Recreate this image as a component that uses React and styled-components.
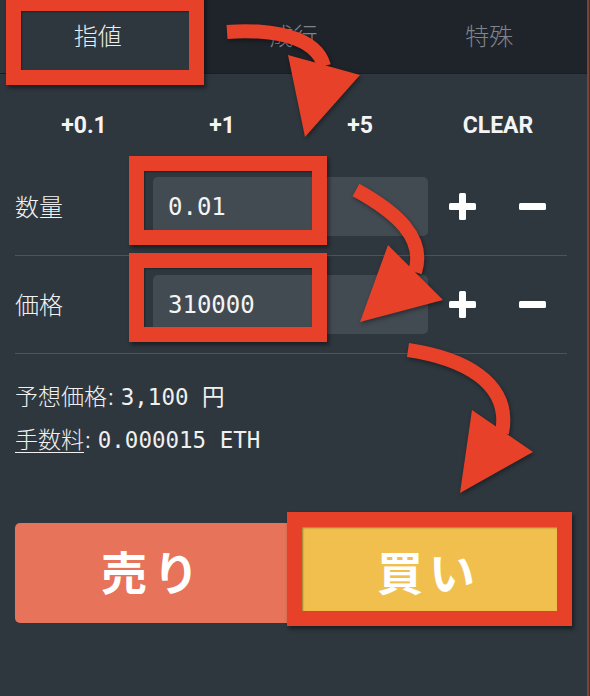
import React from "react";
import styled, { createGlobalStyle } from "styled-components";

const GlobalStyle = createGlobalStyle`
  html, body {
    margin: 0;
    padding: 0;
    background: #2e373e;
  }
  * { box-sizing: border-box; }
`;

const SANS = `"Noto Sans CJK JP", "Noto Sans", sans-serif`;
const MONO = `"DejaVu Sans Mono", "Noto Sans CJK JP", monospace`;

const Frame = styled.div`
  position: relative;
  width: 590px;
  height: 696px;
  overflow: hidden;
  background: #2e373e;
  font-family: ${SANS};
`;

const Panel = styled.div`
  width: 589px;
  height: 696px;
  background: #2e373e;
  border-right: 2px solid #7c4236;
`;

const Tabs = styled.div`
  display: grid;
  grid-template-columns: repeat(3, 1fr);
  height: 74px;
  background: #1f232a;
  border-bottom: 1px solid #1a1e23;
`;

const Tab = styled.div`
  display: flex;
  align-items: center;
  justify-content: center;
  padding-bottom: 4px;
  font-size: 24px;
  font-weight: 300;
  color: ${({ $active }) => ($active ? "#ececec" : "#7e848a")};
  background: ${({ $active }) => ($active ? "#2e373e" : "transparent")};
`;

const Body = styled.div`
  padding: 0 20px 0 15px;
`;

const QuickRow = styled.div`
  display: grid;
  grid-template-columns: repeat(4, 1fr);
  align-items: center;
  height: 84px;
  padding-top: 18px;
`;

const QuickBtn = styled.div`
  text-align: center;
  font-family: Roboto, "Liberation Sans", sans-serif;
  font-weight: 700;
  font-size: 23px;
  color: #f4f4f4;
`;

const FieldRow = styled.div`
  display: grid;
  grid-template-columns: 138px 275px 1fr 1fr;
  align-items: center;
  height: 98px;
  border-bottom: 1px solid #4b545b;
`;

const Label = styled.div`
  font-size: 24px;
  font-weight: 300;
  color: #f2f2f2;
  padding-bottom: 2px;
`;

const Input = styled.div`
  height: 59px;
  display: flex;
  align-items: center;
  padding-left: 15px;
  border-radius: 5px;
  background: #434b52;
  font-family: ${MONO};
  font-size: 24px;
  color: #f4f4f4;
`;

const IconCell = styled.div`
  display: flex;
  justify-content: center;
  align-items: center;
`;

const Info = styled.div`
  padding-top: 21px;
  font-size: 23px;
  line-height: 41px;
  color: #f0f0f0;
`;

const InfoLine = styled.div`
  display: flex;
  align-items: baseline;
  white-space: pre;
`;

const InfoKey = styled.span`
  font-family: ${SANS};
  font-weight: 300;
  text-decoration: ${({ $under }) => ($under ? "underline" : "none")};
  text-underline-offset: 4px;
  text-decoration-thickness: 1px;
`;

const Colon = styled.span`
  font-weight: 300;
  margin: 0 7px 0 1px;
`;

const InfoValue = styled.span`
  font-family: ${MONO};
  font-size: 22.5px;
`;

const Actions = styled.div`
  display: grid;
  grid-template-columns: 1fr 1fr;
  margin-top: 62px;
  height: 100px;
`;

const ActionBtn = styled.div`
  display: flex;
  align-items: center;
  justify-content: center;
  padding-bottom: 6px;
  font-size: 46px;
  font-weight: 700;
  letter-spacing: 6px;
  color: #ffffff;
  background: ${({ $kind }) => ($kind === "sell" ? "#e7735a" : "#f1bf4d")};
  border-radius: ${({ $kind }) => ($kind === "sell" ? "5px 0 0 5px" : "0 5px 5px 0")};
`;

/* annotation overlays */
const Mark = styled.div`
  position: absolute;
  border: 15px solid #e8412a;
  box-shadow: 2px 3px 4px rgba(0, 0, 0, 0.45), inset 1px 1px 2px rgba(0, 0, 0, 0.35);
  pointer-events: none;
`;

const Arrows = styled.svg`
  position: absolute;
  left: 0;
  top: 0;
  pointer-events: none;
  filter: drop-shadow(1px 2px 2px rgba(0, 0, 0, 0.4));
`;

const Plus = () => (
  <svg width="27" height="27" viewBox="0 0 27 27">
    <rect x="0" y="10" width="27" height="7" rx="1.5" fill="#fff" />
    <rect x="10" y="0" width="7" height="27" rx="1.5" fill="#fff" />
  </svg>
);

const Minus = () => (
  <svg width="27" height="27" viewBox="0 0 27 27">
    <rect x="0" y="10" width="27" height="7" rx="1.5" fill="#fff" />
  </svg>
);

const fields = [
  { label: "数量", value: "0.01" },
  { label: "価格", value: "310000" },
];

export default function App() {
  return (
    <>
      <GlobalStyle />
      <Frame>
        <Panel>
          <Tabs>
            <Tab $active>指値</Tab>
            <Tab>成行</Tab>
            <Tab>特殊</Tab>
          </Tabs>
          <Body>
            <QuickRow>
              <QuickBtn>+0.1</QuickBtn>
              <QuickBtn>+1</QuickBtn>
              <QuickBtn>+5</QuickBtn>
              <QuickBtn>CLEAR</QuickBtn>
            </QuickRow>
            {fields.map((f) => (
              <FieldRow key={f.label}>
                <Label>{f.label}</Label>
                <Input>{f.value}</Input>
                <IconCell><Plus /></IconCell>
                <IconCell><Minus /></IconCell>
              </FieldRow>
            ))}
            <Info>
              <InfoLine>
                <InfoKey>予想価格</InfoKey>
                <Colon>:</Colon>
                <InfoValue>3,100 円</InfoValue>
              </InfoLine>
              <InfoLine>
                <InfoKey $under>手数料</InfoKey>
                <Colon>:</Colon>
                <InfoValue>0.000015 ETH</InfoValue>
              </InfoLine>
            </Info>
            <Actions>
              <ActionBtn $kind="sell">売り</ActionBtn>
              <ActionBtn $kind="buy">買い</ActionBtn>
            </Actions>
          </Body>
        </Panel>

        <Mark style={{ left: 6, top: -4, width: 198, height: 89 }} />
        <Mark style={{ left: 129, top: 156, width: 198, height: 89 }} />
        <Mark style={{ left: 129, top: 253, width: 198, height: 89 }} />
        <Mark style={{ left: 287, top: 512, width: 285, height: 114 }} />

        <Arrows width="590" height="696" viewBox="0 0 590 696">
          <g fill="none" stroke="#e8412a" strokeWidth="14">
            <path d="M227,32 C272,29 316,36 324,66" />
            <path d="M356,190 C396,212 426,238 415,272" />
            <path d="M408,350 C462,358 512,382 502,433" />
          </g>
          <g fill="#e8412a">
            <polygon points="288,55 360,75 305,137" />
            <polygon points="388,245 443,300 360,322" />
            <polygon points="472,410 533,452 460,493" />
          </g>
        </Arrows>
      </Frame>
    </>
  );
}
